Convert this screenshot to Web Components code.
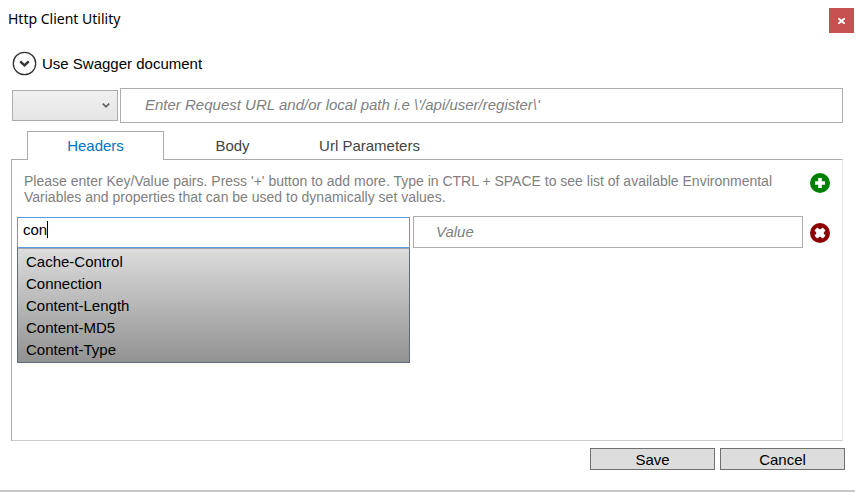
<!DOCTYPE html>
<html lang="en">
<head>
<meta charset="utf-8">
<title>Http Client Utility</title>
<style>
    html, body {
        margin: 0;
        height: 100%;
    }
    body {
        background: #c8c8c8;
        color: #000;
        font: 15px/20px "Liberation Sans", Arial, sans-serif;
    }
</style>
</head>
<body>
<dialog-window heading="Http Client Utility">
    <swagger-toggle>Use Swagger document</swagger-toggle>
    <request-bar placeholder="Enter Request URL and/or local path i.e \'/api/user/register\'"></request-bar>
    <tab-panel tabs="Headers,Body,Url Parameters">
        <key-value-editor>
            <span slot="hint">Please enter Key/Value pairs. Press '+' button to add more. Type in CTRL + SPACE to see list of available Environmental Variables and properties that can be used to dynamically set values.</span>
            <suggest-input value="con" options="Cache-Control,Connection,Content-Length,Content-MD5,Content-Type"></suggest-input>
        </key-value-editor>
    </tab-panel>
    <action-button slot="actions">Save</action-button>
    <action-button slot="actions">Cancel</action-button>
</dialog-window>

<script>
class DialogWindow extends HTMLElement {
    connectedCallback() {
        const heading = this.getAttribute('heading') || '';

        this.attachShadow({ mode: 'open' });
        this.shadowRoot.innerHTML = `
            <style>
                :host {
                    display: flex;
                    flex-direction: column;
                    box-sizing: border-box;
                    min-height: calc(100vh - 2px);
                    padding-bottom: 20px;
                    background: #fff;
                }
                header {
                    display: flex;
                    justify-content: space-between;
                    align-items: flex-start;
                    padding: 8px 1px 0 8px;
                }
                h1 {
                    margin: 0;
                    font: 14px/22px "Noto Sans", "Open Sans", sans-serif;
                }
                .close {
                    display: flex;
                    align-items: center;
                    justify-content: center;
                    width: 25px;
                    height: 25px;
                    padding: 0;
                    border: 0;
                    background: #c75050;
                }
                main {
                    display: flex;
                    flex: 1;
                    flex-direction: column;
                    padding: 18px 12px 0 11px;
                }
                footer {
                    display: flex;
                    justify-content: flex-end;
                    gap: 5px;
                    padding: 7px 10px 0;
                }
            </style>
            <header>
                <h1>${heading}</h1>
                <button class="close" aria-label="Close">
                    <svg width="7" height="6" viewBox="0 0 7 6" fill="none" stroke="#fff" stroke-width="1.9">
                        <path d="M.3 .2 6.7 5.8M6.7 .2.3 5.8"/>
                    </svg>
                </button>
            </header>
            <main><slot></slot></main>
            <footer><slot name="actions"></slot></footer>
        `;
    }
}

class SwaggerToggle extends HTMLElement {
    connectedCallback() {
        this.attachShadow({ mode: 'open' });
        this.shadowRoot.innerHTML = `
            <style>
                :host {
                    display: block;
                }
                button {
                    display: flex;
                    align-items: center;
                    gap: 5px;
                    padding: 0 0 0 1px;
                    border: 0;
                    background: none;
                    color: inherit;
                    font: inherit;
                }
            </style>
            <button aria-expanded="false">
                <svg width="25" height="25" viewBox="0 0 25 25" fill="none" stroke="#333">
                    <circle cx="12.5" cy="12.5" r="11.2" stroke-width="1.3"/>
                    <path d="M8.2 10.4 12.5 14.4 16.8 10.4" stroke-width="2.4"/>
                </svg>
                <span><slot></slot></span>
            </button>
        `;
    }
}

class RequestBar extends HTMLElement {
    connectedCallback() {
        const placeholder = this.getAttribute('placeholder') || '';

        this.attachShadow({ mode: 'open' });
        this.shadowRoot.innerHTML = `
            <style>
                :host {
                    display: flex;
                    align-items: center;
                    gap: 2px;
                    margin-top: 12px;
                    padding-left: 1px;
                }
                .method {
                    display: grid;
                    align-items: center;
                }
                select, svg {
                    grid-area: 1 / 1;
                }
                svg {
                    justify-self: end;
                    margin-right: 8px;
                    pointer-events: none;
                }
                select {
                    appearance: none;
                    width: 106px;
                    height: 31px;
                    border: 1px solid #acacac;
                    border-radius: 0;
                    background: linear-gradient(#f0f0f0, #e5e5e5);
                    font: inherit;
                }
                input {
                    flex: 1;
                    min-width: 0;
                    box-sizing: border-box;
                    height: 35px;
                    padding: 0 24px 2px;
                    border: 1px solid #abadb3;
                    font: inherit;
                }
                input::placeholder {
                    color: #808080;
                    font-style: italic;
                }
            </style>
            <div class="method">
                <select aria-label="Method"><option></option></select>
                <svg width="8" height="6" viewBox="0 0 8 6" fill="none" stroke="#606060" stroke-width="1.7">
                    <path d="M.8 .7 4 3.9 7.2 .7"/>
                </svg>
            </div>
            <input type="text" aria-label="Request URL">
        `;
        this.shadowRoot.querySelector('input').placeholder = placeholder;
    }
}

class TabPanel extends HTMLElement {
    connectedCallback() {
        const tabs = (this.getAttribute('tabs') || '').split(',');

        this.attachShadow({ mode: 'open' });
        this.shadowRoot.innerHTML = `
            <style>
                :host {
                    display: flex;
                    flex: 1;
                    flex-direction: column;
                    margin-top: 8px;
                }
                .tabs {
                    display: flex;
                    padding-left: 16px;
                    margin-bottom: -1px;
                }
                .tabs button {
                    width: 137px;
                    height: 29px;
                    padding: 0;
                    border: 1px solid transparent;
                    border-bottom: 0;
                    background: none;
                    color: #444;
                    font: inherit;
                }
                .tabs button[aria-selected="true"] {
                    position: relative;
                    border-color: #acacac;
                    background: #fff;
                    color: #0072c6;
                }
                .content {
                    flex: 1;
                    border: 1px solid #acacac;
                    border-right-color: #e6e6e6;
                    border-bottom-color: #ccc;
                }
            </style>
            <div class="tabs" role="tablist">
                ${tabs.map((tab, i) => `<button role="tab" aria-selected="${i === 0}">${tab}</button>`).join('')}
            </div>
            <div class="content" role="tabpanel"><slot></slot></div>
        `;
    }
}

class KeyValueEditor extends HTMLElement {
    connectedCallback() {
        this.attachShadow({ mode: 'open' });
        this.shadowRoot.innerHTML = `
            <style>
                :host {
                    display: grid;
                    grid-template-columns: 393fr 390fr 24px;
                    column-gap: 3px;
                    row-gap: 11px;
                    align-items: end;
                    padding: 13px 12px 0 5px;
                }
                .hint {
                    grid-column: 1 / 3;
                    margin: 0;
                    padding: 0 16px 0 7px;
                    color: #808080;
                    font-size: 14px;
                    line-height: 16px;
                }
                .value {
                    box-sizing: border-box;
                    width: 100%;
                    height: 32px;
                    padding: 0 22px 2px;
                    border: 1px solid #abadb3;
                    font: inherit;
                }
                .value::placeholder {
                    color: #808080;
                    font-style: italic;
                }
                .icon {
                    display: block;
                    justify-self: end;
                    padding: 0;
                    border: 0;
                    background: none;
                    line-height: 0;
                }
                .add {
                    align-self: start;
                }
                .remove {
                    padding-bottom: 5px;
                }
            </style>
            <p class="hint"><slot name="hint"></slot></p>
            <button class="icon add" aria-label="Add pair">
                <svg width="20" height="20" viewBox="0 0 20 20">
                    <circle cx="10" cy="10" r="10" fill="#008000"/>
                    <path d="M8.2 5h3.6v3.2H15v3.6h-3.2V15H8.2v-3.2H5V8.2h3.2z" fill="#fff"/>
                </svg>
            </button>
            <slot></slot>
            <input class="value" type="text" placeholder="Value" aria-label="Value">
            <button class="icon remove" aria-label="Remove pair">
                <svg width="20" height="20" viewBox="0 0 20 20">
                    <circle cx="10" cy="10" r="10" fill="#8b0000"/>
                    <path d="M7.3 4.5 10 6.5 12.7 4.5 15.5 7.3 13.5 10 15.5 12.7 12.7 15.5 10 13.5 7.3 15.5 4.5 12.7 6.5 10 4.5 7.3z" fill="#fff"/>
                </svg>
            </button>
        `;
    }
}

class SuggestInput extends HTMLElement {
    connectedCallback() {
        const value = this.getAttribute('value') || '';
        const options = (this.getAttribute('options') || '').split(',');

        this.attachShadow({ mode: 'open' });
        this.shadowRoot.innerHTML = `
            <style>
                :host {
                    display: block;
                    position: relative;
                }
                input {
                    display: block;
                    box-sizing: border-box;
                    width: 100%;
                    height: 31px;
                    padding: 0 5px 6px;
                    border: 1px solid #569de5;
                    outline: 0;
                    caret-color: transparent;
                    color: inherit;
                    font: inherit;
                }
                .caret {
                    position: absolute;
                    top: 4px;
                    left: 6px;
                    height: 17px;
                    border-right: 1px solid #000;
                    color: transparent;
                    pointer-events: none;
                }
                .caret::before {
                    content: attr(data-typed);
                }
                ul {
                    position: absolute;
                    top: 100%;
                    left: 0;
                    right: 0;
                    margin: 0;
                    padding: 2px 7px 1px 8px;
                    border: 1px solid #5f6b78;
                    border-top: 1px solid #a0a4aa;
                    background: linear-gradient(#dcdcdc, #929292);
                    list-style: none;
                }
                li {
                    line-height: 22px;
                }
            </style>
            <input type="text" role="combobox" aria-expanded="true" aria-label="Key" value="${value}">
            <span class="caret" data-typed="${value}"></span>
            <ul role="listbox">
                ${options.map(option => `<li role="option">${option}</li>`).join('')}
            </ul>
        `;
    }
}

class ActionButton extends HTMLElement {
    connectedCallback() {
        this.attachShadow({ mode: 'open' });
        this.shadowRoot.innerHTML = `
            <style>
                :host {
                    display: block;
                }
                button {
                    display: block;
                    width: 125px;
                    height: 22px;
                    padding: 1px 0 0;
                    border: 1px solid #707070;
                    background: #ddd;
                    color: inherit;
                    font: inherit;
                }
            </style>
            <button><slot></slot></button>
        `;
    }
}

customElements.define('dialog-window', DialogWindow);
customElements.define('swagger-toggle', SwaggerToggle);
customElements.define('request-bar', RequestBar);
customElements.define('tab-panel', TabPanel);
customElements.define('key-value-editor', KeyValueEditor);
customElements.define('suggest-input', SuggestInput);
customElements.define('action-button', ActionButton);
</script>
</body>
</html>
